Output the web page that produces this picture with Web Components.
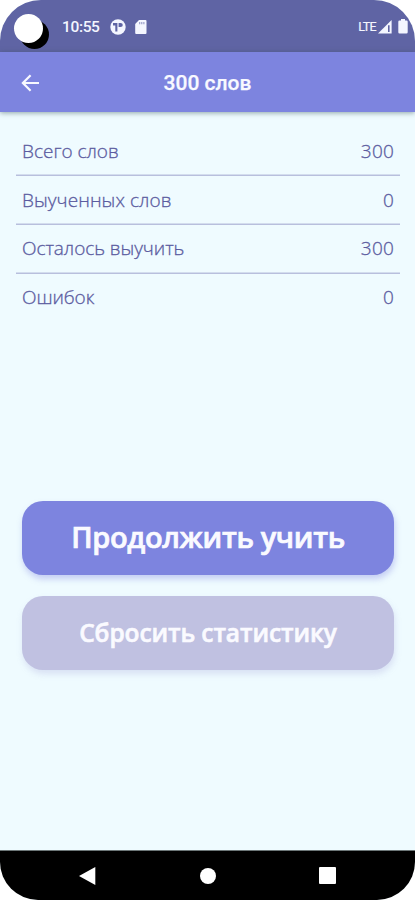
<!DOCTYPE html>
<html lang="ru">
<head>
<meta charset="utf-8">
<meta name="viewport" content="width=device-width, initial-scale=1">
<title>300 слов</title>
<style>
    html, body {
        margin: 0;
        height: 100%;
        background: #fff;
        overflow: hidden;
    }
</style>
</head>
<body>
<phone-screen>
    <status-bar slot="top" time="10:55" network="LTE"></status-bar>
    <app-header slot="top">300 слов</app-header>
    <stat-list>
        <stat-row value="300">Всего слов</stat-row>
        <stat-row value="0" style="--track: .08px">Выученных слов</stat-row>
        <stat-row value="300" style="--track: -.06px">Осталось выучить</stat-row>
        <stat-row value="0" style="--track: -.1px">Ошибок</stat-row>
    </stat-list>
    <action-button>Продолжить учить</action-button>
    <action-button muted>Сбросить статистику</action-button>
    <nav-bar slot="bottom"></nav-bar>
</phone-screen>

<script>
class BaseElement extends HTMLElement {
  constructor() {
    super();
    const template = document.createElement('template');
    template.innerHTML = this.constructor.markup;
    this.attachShadow({ mode: 'open' });
    this.shadowRoot.appendChild(template.content.cloneNode(true));
  }
}

class PhoneScreen extends BaseElement {
  static markup = `
    <style>
        :host {
            display: flex;
            flex-direction: column;
            width: 415px;
            height: 900px;
            overflow: hidden;
            border-radius: 41px 41px 38px 38px;
            background: #effbff;
            font-family: "Open Sans", "Noto Sans", sans-serif;
        }
        header {
            flex: none;
        }
        main {
            flex: 1;
            display: flex;
            flex-direction: column;
            gap: 22px;
            padding: 15px 15px 0 16px;
        }
    </style>
    <header><slot name="top"></slot></header>
    <main><slot></slot></main>
    <slot name="bottom"></slot>
  `;
}

class StatusBar extends BaseElement {
  static markup = `
    <style>
        :host {
            display: flex;
            align-items: center;
            box-sizing: border-box;
            height: 52px;
            padding: 1px 7px 0 14px;
            background: #5f64a4;
            color: #f4f6ff;
            font: 500 15.5px/20px Roboto, sans-serif;
        }
        .camera {
            width: 29px;
            height: 29px;
            border-radius: 50%;
            background: #fff;
            box-shadow: 6px 6px 0 #000;
            margin: 3px 19px 0 0;
        }
        .time {
            width: 48px;
            letter-spacing: -.35px;
        }
        .network {
            margin-left: auto;
            font-size: 12.5px;
            font-weight: 400;
            letter-spacing: -.6px;
            margin-right: 2px;
            -webkit-text-stroke: .2px;
        }
        svg {
            display: block;
            fill: #f4f6ff;
        }
    </style>
    <div class="camera"></div>
    <span class="time"></span>
    <svg width="16" height="16" viewBox="0 0 16 16">
        <circle cx="8" cy="8" r="7.7"/>
        <path fill="#5f64a4" d="M3 4h4.4v8.6H5.3V6.6H3zM8.6 4h1.9q2.3 0 2.3 2t-2.3 2H8.6z"/>
    </svg>
    <svg width="12" height="14" viewBox="0 0 12 14" style="margin-left:9px">
        <path d="M4 0h6.5q1 0 1 1v12q0 1-1 1H1.2q-1 0-1-1V4z"/>
        <path fill="#5f64a4" opacity=".55" d="M4 2h1.3v2.2H4zM6.1 2h1.3v2.2H6.1zM8.2 2h1.3v2.2H8.2z"/>
    </svg>
    <span class="network"></span>
    <svg width="14" height="14" viewBox="0 0 14 14">
        <path d="M13.6 0v13.6H0z"/>
        <path fill="#5f64a4" d="M10 5.3h1.6v6.8H10z"/>
    </svg>
    <svg width="10" height="15" viewBox="0 0 10 15" style="margin-left:6px">
        <path d="M3 0h4v1.5h1.4q1.3 0 1.3 1.2v10.6q0 1.3-1.3 1.3H1.6q-1.3 0-1.3-1.3V2.7q0-1.2 1.3-1.2H3z"/>
    </svg>
  `;

  connectedCallback() {
    this.shadowRoot.querySelector('.time').textContent = this.getAttribute('time');
    this.shadowRoot.querySelector('.network').textContent = this.getAttribute('network');
  }
}

class AppHeader extends BaseElement {
  static markup = `
    <style>
        :host {
            display: grid;
            grid-template-columns: 40px 1fr 40px;
            align-items: center;
            height: 60px;
            padding: 1px 10px 0;
            box-sizing: border-box;
            background: #7d84df;
            color: #f8f9ff;
            box-shadow: 0 1px 5px rgba(50, 80, 80, .5);
            position: relative;
            font: 500 21px/28px Roboto, sans-serif;
        }
        svg {
            justify-self: center;
        }
        .title {
            text-align: center;
            padding-top: 1px;
            -webkit-text-stroke: .25px;
        }
    </style>
    <svg width="20" height="18" viewBox="0 0 20 18" fill="none" stroke="#f8f9ff" stroke-width="2.2">
        <path d="M19 9H3M10.6 1.3 2.9 9l7.7 7.7"/>
    </svg>
    <span class="title"><slot></slot></span>
  `;
}

class StatList extends BaseElement {
  static markup = `
    <style>
        :host {
            display: block;
            height: 352px;
        }
    </style>
    <slot></slot>
  `;
}

class StatRow extends BaseElement {
  static markup = `
    <style>
        :host {
            display: flex;
            justify-content: space-between;
            align-items: center;
            box-sizing: border-box;
            height: 48.9px;
            padding: 0 6px 1.5px;
            box-shadow: inset 0 -1.6px #b8bfdd;
            color: #5b5ba0;
            font-size: 19px;
            font-weight: 300;
            line-height: 26px;
            -webkit-text-stroke: .3px;
        }
        :host(:last-of-type) {
            box-shadow: none;
        }
        .label {
            letter-spacing: var(--track, 0);
        }
        .value {
            letter-spacing: .2px;
        }
    </style>
    <span class="label"><slot></slot></span>
    <span class="value"></span>
  `;

  connectedCallback() {
    this.shadowRoot.querySelector('.value').textContent = this.getAttribute('value');
  }
}

class ActionButton extends BaseElement {
  static markup = `
    <style>
        :host {
            display: block;
            margin: 0 6px;
        }
        :host([muted]) {
            margin-top: -1px;
        }
        button {
            display: block;
            width: 100%;
            height: 74px;
            border: 0;
            border-radius: 21px;
            padding: 0 0 2px;
            background: #7d84df;
            color: #fafaff;
            font: 600 29px/40px "Open Sans", "Noto Sans", sans-serif;
            letter-spacing: -.35px;
            -webkit-text-stroke: .7px;
            box-shadow: 1px 4px 6px rgba(125, 132, 223, .38);
            white-space: nowrap;
        }
        :host([muted]) button {
            background: #c0c1e1;
            padding-bottom: 0;
            font-size: 24.5px;
            letter-spacing: -.1px;
            -webkit-text-stroke: .6px;
            box-shadow: 1px 4px 6px rgba(150, 150, 210, .25);
        }
    </style>
    <button><slot></slot></button>
  `;
}

class NavBar extends BaseElement {
  static markup = `
    <style>
        :host {
            display: flex;
            justify-content: space-between;
            align-items: center;
            box-sizing: border-box;
            height: 50px;
            padding: 0 79px;
            border-top: 1px solid #6d7778;
            background: #000;
        }
        svg {
            fill: #fff;
        }
    </style>
    <svg width="17" height="18" viewBox="0 0 17 18"><path d="M16.3 0v18L0 9z"/></svg>
    <svg width="16" height="16" viewBox="0 0 16 16"><circle cx="8" cy="8" r="8"/></svg>
    <svg width="17" height="17" viewBox="0 0 17 17"><rect width="17" height="17" rx="1"/></svg>
  `;
}

customElements.define('phone-screen', PhoneScreen);
customElements.define('status-bar', StatusBar);
customElements.define('app-header', AppHeader);
customElements.define('stat-list', StatList);
customElements.define('stat-row', StatRow);
customElements.define('action-button', ActionButton);
customElements.define('nav-bar', NavBar);
</script>
</body>
</html>
